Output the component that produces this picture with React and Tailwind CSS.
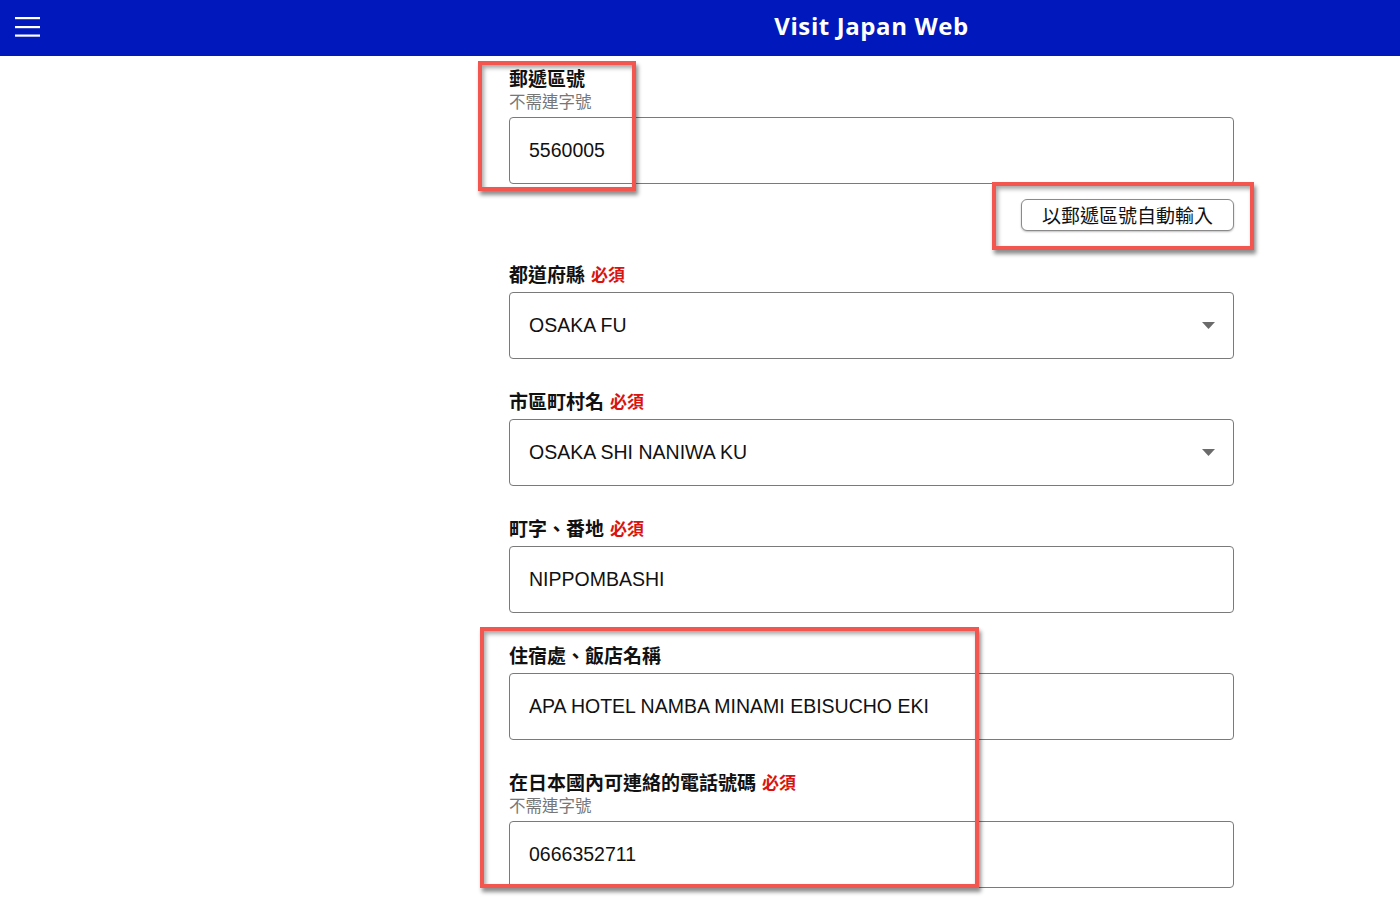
import { useState } from "react";

const cjk = { fontFamily: '"Noto Sans CJK TC", "Noto Sans", sans-serif' };
const latin = { fontFamily: '"Liberation Sans", "Noto Sans CJK TC", sans-serif' };

function Label({ text, required, hint }) {
  return (
    <div style={cjk}>
      <div className="h-[26px] flex items-center gap-[6px] leading-[26px]">
        <span className="text-[19px] font-bold text-[#111]">{text}</span>
        {required && <span className="text-[17px] font-bold text-[#d9140f]">必須</span>}
      </div>
      {hint && <div className="h-[21px] leading-[21px] text-[16.5px] text-[#777]">{hint}</div>}
    </div>
  );
}

function TextField({ value, onChange }) {
  return (
    <input
      type="text"
      value={value}
      onChange={(e) => onChange(e.target.value)}
      style={latin}
      className="mt-[5px] block w-full h-[67px] px-[19px] border border-[#7a7a7a] rounded-[4px] text-[19.5px] text-[#111] bg-white outline-none"
    />
  );
}

function SelectField({ value }) {
  return (
    <div className="mt-[5px] relative w-full h-[67px] border border-[#7a7a7a] rounded-[4px] bg-white flex items-center px-[19px]">
      <span style={latin} className="text-[19.5px] text-[#111]">{value}</span>
      <svg className="absolute right-[18px] top-[29px]" width="13" height="8" viewBox="0 0 13 8">
        <path d="M0 0h13L6.5 7z" fill="#6b6b6b" />
      </svg>
    </div>
  );
}

// red call-out frames drawn over the form
function Callout({ className }) {
  return (
    <div
      className={`absolute border-[4px] border-[#f2564e] pointer-events-none shadow-[2px_4px_4px_rgba(0,0,0,0.45),inset_2px_3px_4px_rgba(0,0,0,0.35)] ${className}`}
    />
  );
}

export default function App() {
  const [zip, setZip] = useState("5560005");
  const [street, setStreet] = useState("NIPPOMBASHI");
  const [hotel, setHotel] = useState("APA HOTEL NAMBA MINAMI EBISUCHO EKI");
  const [phone, setPhone] = useState("0666352711");

  return (
    <div className="relative w-[1400px] h-[908px] bg-white overflow-hidden">
      <header className="h-[56px] bg-[#0018bc] flex items-center">
        <div className="w-[343px] pl-[15px] flex items-center">
          <svg width="25" height="22" viewBox="0 0 25 22">
            <rect x="0" y="0" width="25" height="2.2" fill="#fff" />
            <rect x="0" y="9" width="25" height="2.2" fill="#fff" />
            <rect x="0" y="17.5" width="25" height="2.2" fill="#fff" />
          </svg>
        </div>
        <div className="flex-1 flex justify-center pb-[4px]">
          <h1
            style={{ fontFamily: '"Open Sans", sans-serif' }}
            className="text-[24px] leading-[30px] font-bold tracking-[0.6px] text-white"
          >
            Visit Japan Web
          </h1>
        </div>
      </header>

      <div className="flex">
        <aside className="w-[343px]" />
        <main className="flex-1 flex justify-center">
          <form className="w-[725px] pt-[9px]">
            <div>
              <Label text="郵遞區號" hint="不需連字號" />
              <TextField value={zip} onChange={setZip} />
              <div className="flex justify-end mt-[15px]">
                <button
                  type="button"
                  style={cjk}
                  className="h-[32px] px-[20px] border border-[#8a8a8a] rounded-[6px] bg-white text-[19px] leading-[30px] text-[#111] shadow-[0_1px_2px_rgba(0,0,0,0.25)]"
                >
                  以郵遞區號自動輸入
                </button>
              </div>
            </div>

            <div className="mt-[30px]">
              <Label text="都道府縣" required />
              <SelectField value="OSAKA FU" />
            </div>

            <div className="mt-[29px]">
              <Label text="市區町村名" required />
              <SelectField value="OSAKA SHI NANIWA KU" />
            </div>

            <div className="mt-[29px]">
              <Label text="町字、番地" required />
              <TextField value={street} onChange={setStreet} />
            </div>

            <div className="mt-[29px]">
              <Label text="住宿處、飯店名稱" />
              <TextField value={hotel} onChange={setHotel} />
            </div>

            <div className="mt-[29px]">
              <Label text="在日本國內可連絡的電話號碼" required hint="不需連字號" />
              <TextField value={phone} onChange={setPhone} />
            </div>
          </form>
        </main>
      </div>

      <Callout className="left-[478px] top-[61px] w-[158px] h-[130px]" />
      <Callout className="left-[992px] top-[182px] w-[262px] h-[68px]" />
      <Callout className="left-[480px] top-[627px] w-[499px] h-[261px]" />
    </div>
  );
}
